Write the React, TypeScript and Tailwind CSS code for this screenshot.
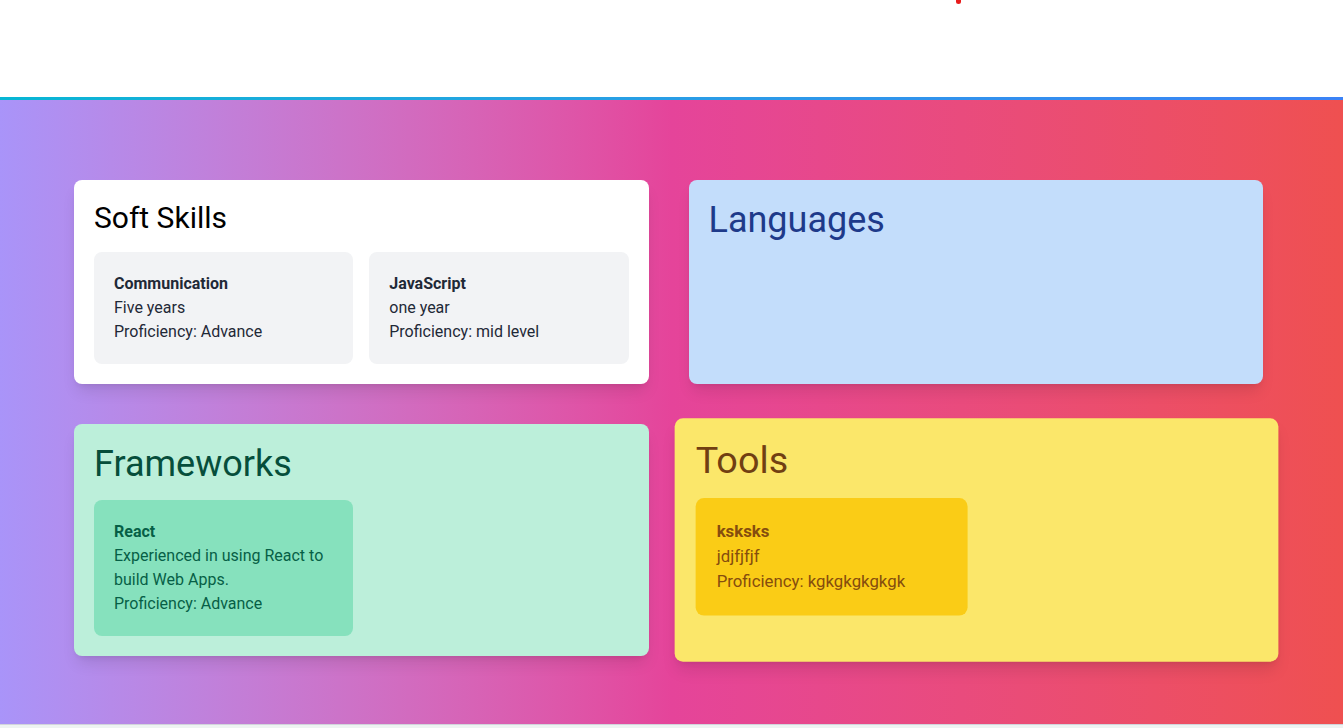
import React from 'react';

type Skill = { name: string; detail: string; level: string };

const softSkills: Skill[] = [
    { name: 'Communication', detail: 'Five years', level: 'Advance' },
    { name: 'JavaScript', detail: 'one year', level: 'mid level' },
];
const frameworks: Skill[] = [
    { name: 'React', detail: 'Experienced in using React to build Web Apps.', level: 'Advance' },
];
const tools: Skill[] = [
    { name: 'ksksks', detail: 'jdjfjfjf', level: 'kgkgkgkgkgk' },
];

const SkillBox = ({ skill, box }: { skill: Skill; box: string }) => (
    <div className={`rounded-lg p-5 ${box}`}>
        <h3 className="font-bold">{skill.name}</h3>
        <p>{skill.detail}</p>
        <p>Proficiency: {skill.level}</p>
    </div>
);

const App = () => {
    return (
        <div className="min-h-screen bg-[#eef3f2] text-base" style={{ fontFamily: '"Segoe UI", Roboto, sans-serif' }}>
            <header className="relative h-[97px] bg-white">
                <span className="absolute left-[956px] top-0 h-[4px] w-[5px] rounded-b-full bg-[#e81c1c]"></span>
            </header>
            <div className="h-[3px] bg-gradient-to-r from-[#06b6d4] to-[#3b82f6]"></div>

            <section className="h-[625px] border-b border-[#d1d5db] bg-gradient-to-r from-[#a994f9] via-[#e5449a] to-[#ef5050] pt-20 pl-[74px] pr-[80px]">
                <div className="grid grid-cols-2 gap-x-10 gap-y-10">
                    <div className="rounded-lg bg-white p-5 shadow-lg">
                        <h2 className="mb-4 text-3xl text-black">Soft Skills</h2>
                        <div className="grid grid-cols-2 gap-4 text-[#1f2937]">
                            {softSkills.map(s => <SkillBox key={s.name} skill={s} box="bg-[#f2f3f5]" />)}
                        </div>
                    </div>

                    <div className="rounded-lg bg-[#c3ddfb] p-5 shadow-lg">
                        <h2 className="mb-4 text-4xl text-[#1e3a8a]">Languages</h2>
                    </div>

                    <div className="rounded-lg bg-[#bcefda] p-5 shadow-lg">
                        <h2 className="mb-4 text-4xl text-[#064e3b]">Frameworks</h2>
                        <div className="grid grid-cols-2 gap-4 text-[#065f46]">
                            {frameworks.map(s => <SkillBox key={s.name} skill={s} box="bg-[#86e1bd]" />)}
                        </div>
                    </div>

                    <div className="scale-105 rounded-lg bg-[#fbe76a] p-5 shadow-lg">
                        <h2 className="mb-4 text-4xl text-[#713f12]">Tools</h2>
                        <div className="grid grid-cols-2 gap-4 text-[#854d0e]">
                            {tools.map(s => <SkillBox key={s.name} skill={s} box="bg-[#facc16]" />)}
                        </div>
                    </div>
                </div>
            </section>
        </div>
    );
}

export default App
